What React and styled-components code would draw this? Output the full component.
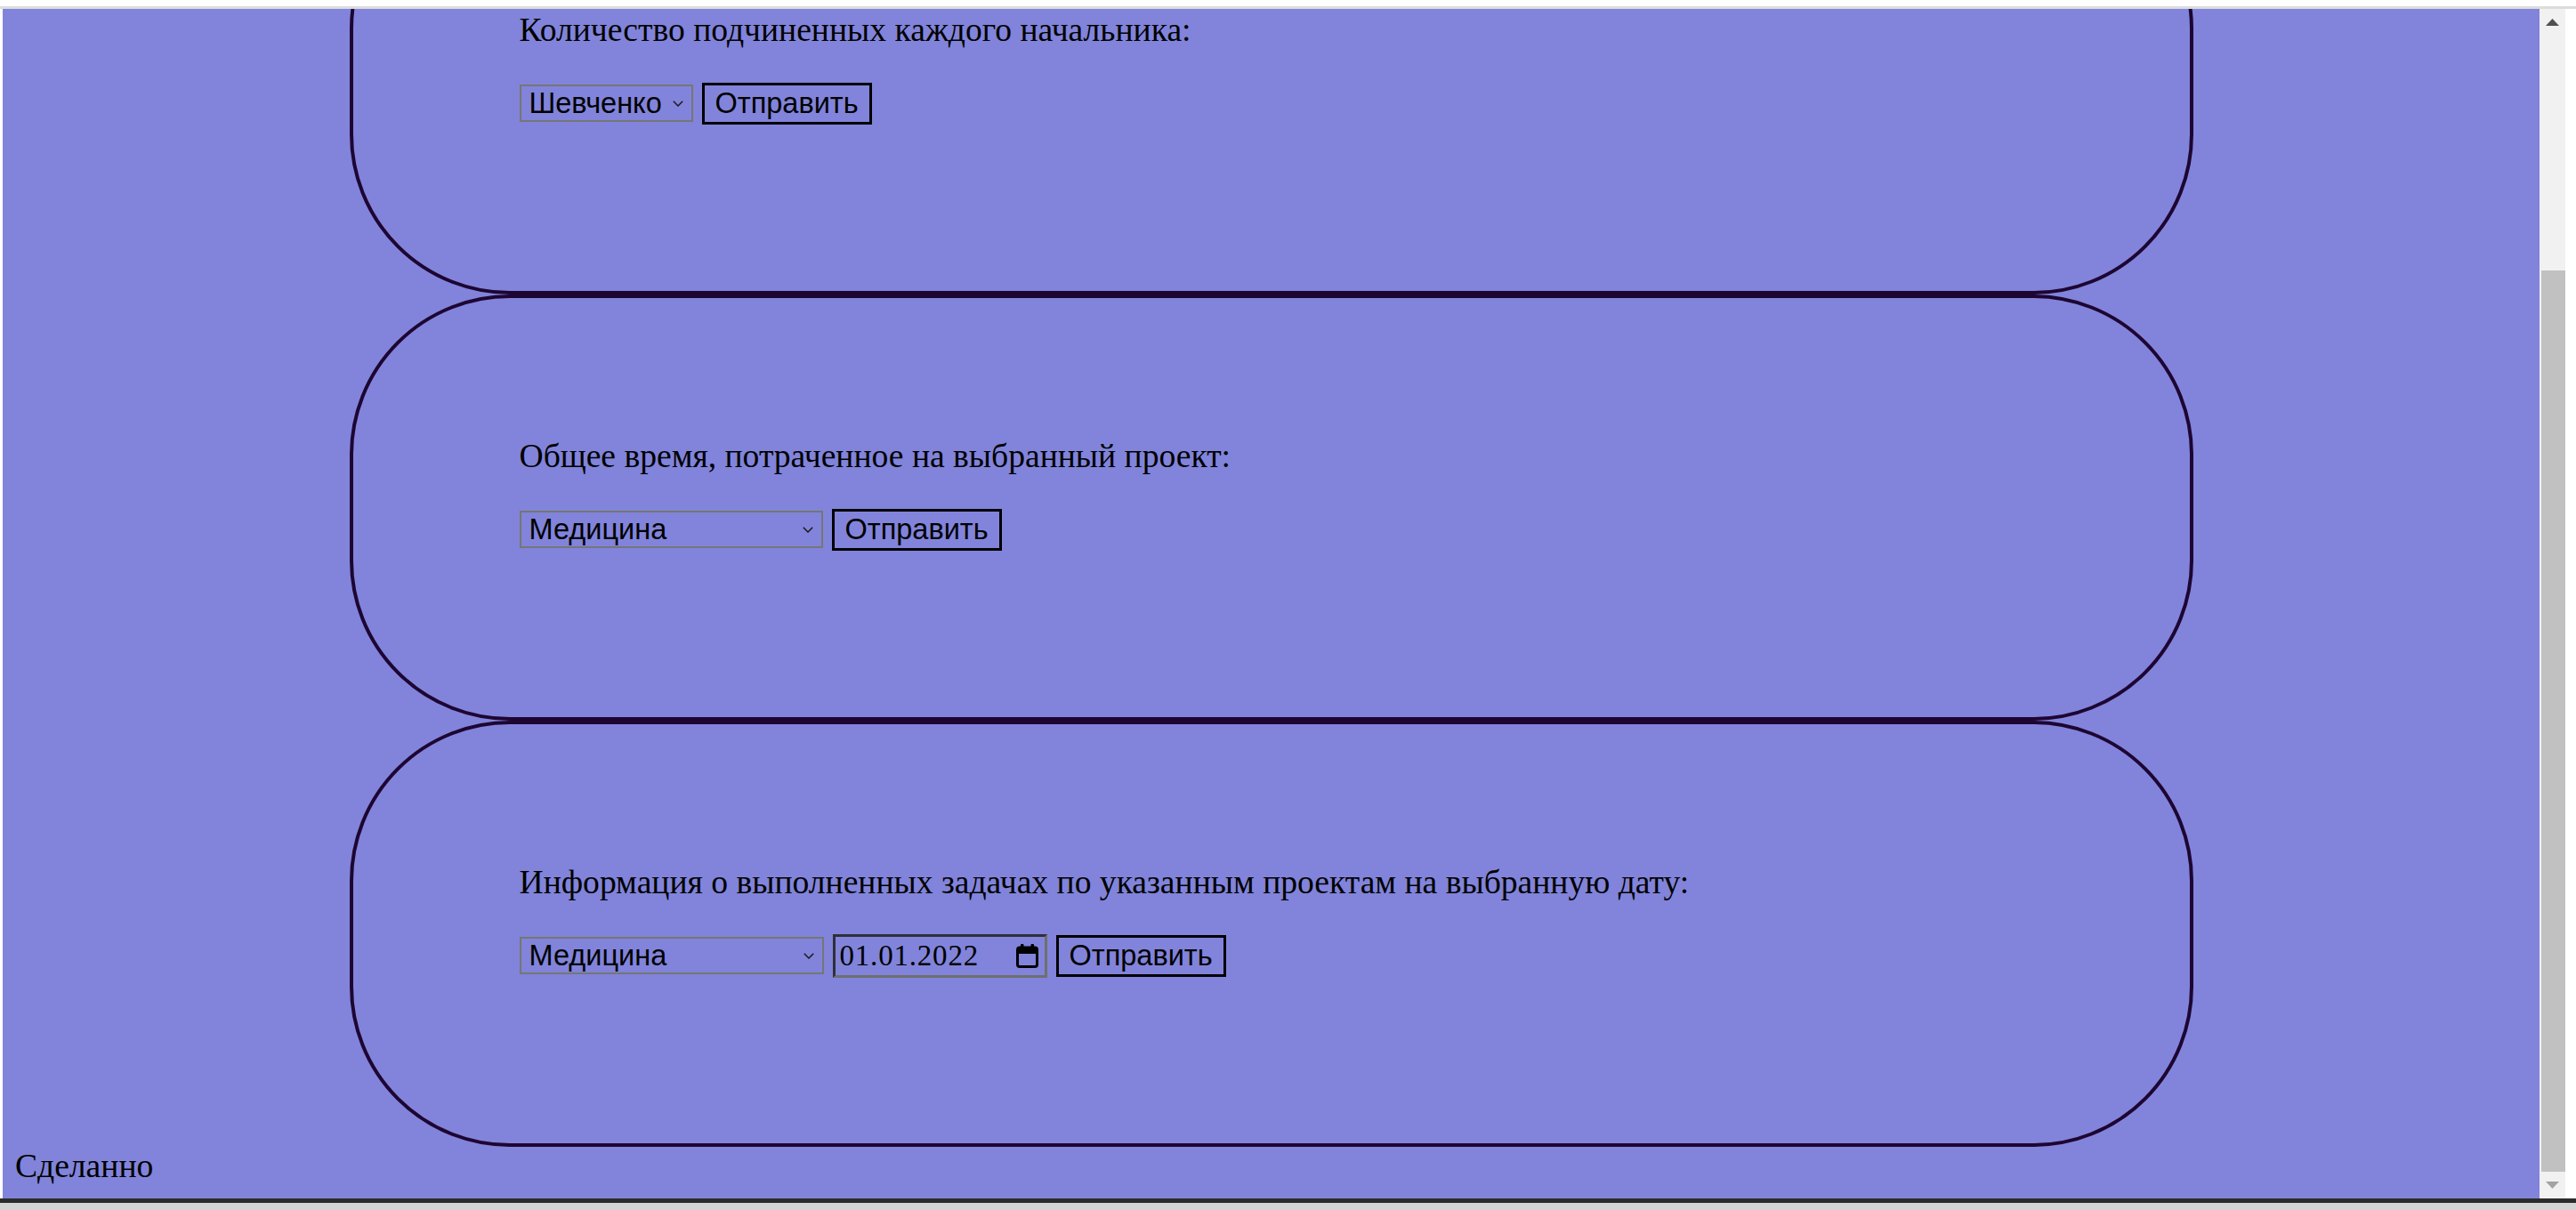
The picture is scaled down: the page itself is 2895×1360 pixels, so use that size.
import React, { useLayoutEffect, useRef } from "react";
import styled, { createGlobalStyle } from "styled-components";

const GlobalStyle = createGlobalStyle`
  html, body {
    margin: 0;
    padding: 0;
    background: #fff;
  }
  #root {
    width: 2895px;
    height: 1360px;
  }
`;

const Screen = styled.div`
  width: 2895px;
  height: 1360px;
  display: flex;
  flex-direction: column;
  overflow: hidden;
  background: #fff;
`;

const TopEdge = styled.div`
  height: 7px;
  flex: none;
  background: #fff;
  border-bottom: 3px solid #dcdcdc;
`;

const Middle = styled.div`
  height: 1337px;
  flex: none;
  display: flex;
`;

const SideEdge = styled.div`
  width: ${(p) => (p.$width ? `${p.$width}px` : "auto")};
  flex: ${(p) => (p.$width ? "none" : "1")};
  background: #fff;
`;

const Viewport = styled.div`
  width: 2851px;
  flex: none;
  overflow: hidden;
  background: #8184da;
`;

const Page = styled.div`
  padding: 14px 14px 16px;
  font-family: "Liberation Serif", "Times New Roman", serif;
  font-size: 37.6px;
  color: #000;
`;

/* one rounded panel per query form */
const Card = styled.section`
  box-sizing: border-box;
  width: 2072px;
  height: 479px;
  margin: 0 auto;
  padding: 157.5px 0 0 187px;
  border: 4px solid #1e0633;
  border-radius: 180px;
  display: flex;
  flex-direction: column;
`;

const Title = styled.p`
  margin: 0;
  line-height: 40px;
  font-size: 37.6px;
`;

const Row = styled.div`
  margin-top: 38px;
  min-height: 49px;
  display: flex;
  align-items: center;
  gap: 10px;
`;

const SelectBox = styled.div`
  box-sizing: border-box;
  width: ${(p) => p.$width}px;
  height: 42px;
  display: flex;
  align-items: center;
  padding-right: 9px;
  border: 2px solid #767676;
`;

const NativeSelect = styled.select`
  appearance: none;
  -webkit-appearance: none;
  flex: 1;
  min-width: 0;
  height: 100%;
  margin: 0;
  padding: 0 0 0 9px;
  border: none;
  outline: none;
  background: transparent;
  font-family: "Liberation Sans", Arial, sans-serif;
  font-size: 32.5px;
  color: #000;
`;

const SubmitButton = styled.button`
  box-sizing: border-box;
  height: 47px;
  margin: 0;
  padding: 0 12px;
  border: 3px solid #000;
  background: transparent;
  font-family: "Liberation Sans", Arial, sans-serif;
  font-size: 32.5px;
  line-height: 1;
  color: #000;
  cursor: pointer;
`;

const DateField = styled.div`
  box-sizing: border-box;
  width: 241px;
  height: 49px;
  display: flex;
  align-items: center;
  justify-content: space-between;
  padding: 0 7px 0 5px;
  border-style: solid;
  border-width: 3px;
  border-color: #2f2f3a #6f6f6f #6f6f6f #2f2f3a;
  font-family: "Liberation Serif", "Times New Roman", serif;
  font-size: 33px;
  letter-spacing: 0.8px;
`;

const Done = styled.div`
  margin-top: 2px;
  line-height: 40px;
`;

const Scrollbar = styled.div`
  width: 29px;
  flex: none;
  display: flex;
  flex-direction: column;
  background: #f1f1f1;
`;

const ArrowButton = styled.div`
  height: 30px;
  flex: none;
  display: flex;
  align-items: center;
  justify-content: center;
`;

const Track = styled.div`
  flex: 1;
  display: flex;
  flex-direction: column;
  justify-content: flex-end;
`;

const Thumb = styled.div`
  height: ${(p) => p.$height}px;
  margin-left: 2px;
  background: #c1c1c1;
`;

const BottomEdge = styled.div`
  height: 5px;
  flex: none;
  background: #2b2b2b;
`;

const BottomRest = styled.div`
  flex: 1;
  background: #d4d4d4;
`;

const Chevron = () => (
  <svg width="12" height="7" viewBox="0 0 12 7">
    <path d="M0.8 0.8 L6 6 L11.2 0.8" fill="none" stroke="#1a1a1a" strokeWidth="1.5" />
  </svg>
);

const CalendarIcon = () => (
  <svg width="25" height="27" viewBox="0 0 25 27">
    <rect x="5" y="0" width="3.5" height="6" rx="1" fill="#000" />
    <rect x="16.5" y="0" width="3.5" height="6" rx="1" fill="#000" />
    <rect x="1.5" y="4" width="22" height="21.5" rx="2.5" fill="none" stroke="#000" strokeWidth="3" />
    <rect x="1.5" y="4" width="22" height="7" fill="#000" />
  </svg>
);

const Triangle = ({ up, color }) => (
  <svg width="15" height="8" viewBox="0 0 15 8">
    <path d={up ? "M0 8 L7.5 0 L15 8 Z" : "M0 0 L7.5 8 L15 0 Z"} fill={color} />
  </svg>
);

const Dropdown = ({ width, options }) => (
  <SelectBox $width={width}>
    <NativeSelect defaultValue={options[0]}>
      {options.map((o) => (
        <option key={o}>{o}</option>
      ))}
    </NativeSelect>
    <Chevron />
  </SelectBox>
);

const bosses = ["Шевченко", "Иванов", "Петров"];
const projects = ["Медицина", "Образование", "Транспорт", "Строительство"];

export default function App() {
  const viewRef = useRef(null);

  // the window is shown scrolled to the very bottom
  useLayoutEffect(() => {
    const el = viewRef.current;
    if (el) el.scrollTop = el.scrollHeight;
  }, []);

  return (
    <>
      <GlobalStyle />
      <Screen>
        <TopEdge />
        <Middle>
          <SideEdge $width={3} />
          <Viewport ref={viewRef}>
            <Page>
              <Card>
                <Title>Количество подчиненных каждого начальника:</Title>
                <Row>
                  <Dropdown width={195} options={bosses} />
                  <SubmitButton>Отправить</SubmitButton>
                </Row>
              </Card>
              <Card>
                <Title>Общее время, потраченное на выбранный проект:</Title>
                <Row>
                  <Dropdown width={341} options={projects} />
                  <SubmitButton>Отправить</SubmitButton>
                </Row>
              </Card>
              <Card>
                <Title>Информация о выполненных задачах по указанным проектам на выбранную дату:</Title>
                <Row>
                  <Dropdown width={342} options={projects} />
                  <DateField>
                    <span>01.01.2022</span>
                    <CalendarIcon />
                  </DateField>
                  <SubmitButton>Отправить</SubmitButton>
                </Row>
              </Card>
              <Done>Сделанно</Done>
            </Page>
          </Viewport>
          <Scrollbar>
            <ArrowButton>
              <Triangle up color="#505050" />
            </ArrowButton>
            <Track>
              <Thumb $height={1013} />
            </Track>
            <ArrowButton>
              <Triangle color="#a3a3a3" />
            </ArrowButton>
          </Scrollbar>
          <SideEdge />
        </Middle>
        <BottomEdge />
        <BottomRest />
      </Screen>
    </>
  );
}
